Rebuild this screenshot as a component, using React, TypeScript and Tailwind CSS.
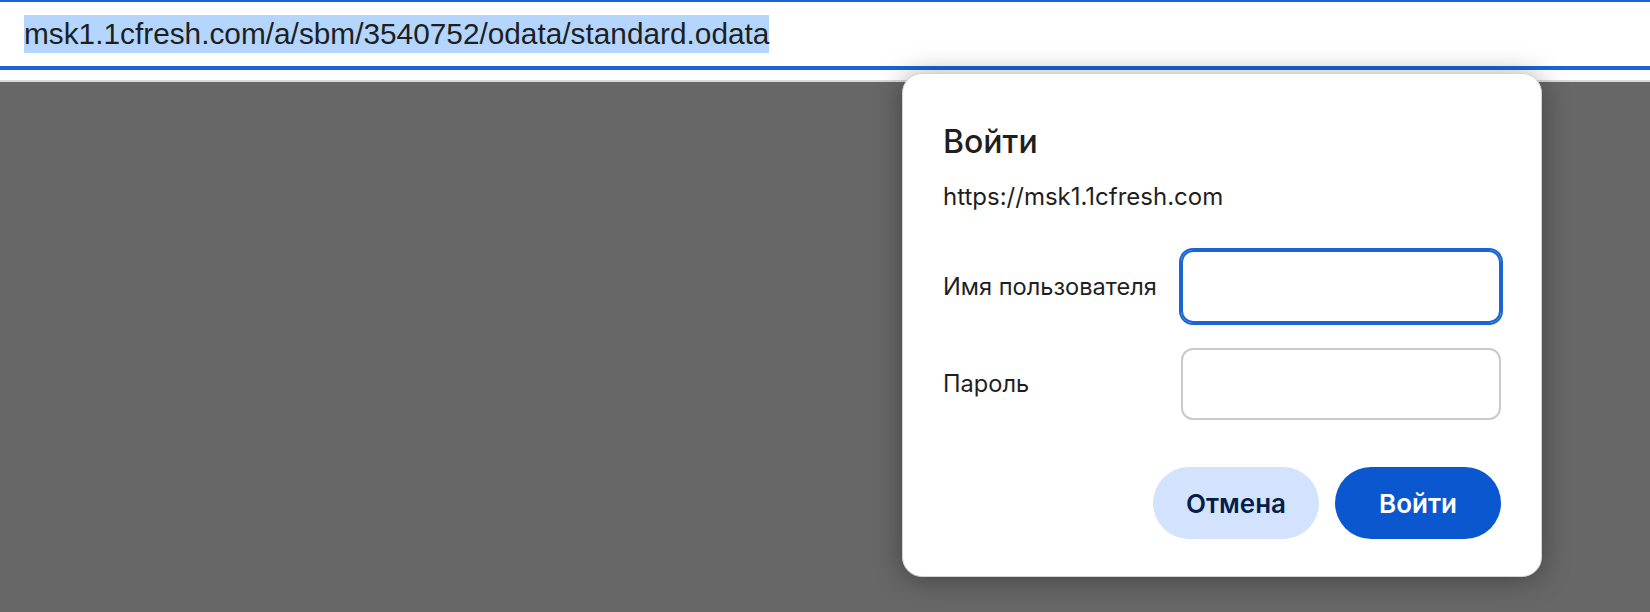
import React from "react";

export default function App() {
  return (
    <div className="relative w-[1650px] h-[612px] overflow-hidden bg-[#676767]">
      {/* Toolbar / URL bar */}
      <div className="bg-white">
        <div className="h-[2px] bg-[#1a65d2]" />
        <div className="h-[64px] flex items-center pl-[24px]">
          <span className="bg-[#b4d6fe] text-[#1f1f1f] text-[29.8px] leading-[38px] font-['Liberation_Sans',Arial,sans-serif]">
            msk1.1cfresh.com/a/sbm/3540752/odata/standard.odata
          </span>
        </div>
        <div className="h-[4px] bg-[#1a65d2]" />
        <div className="h-[10px] bg-white" />
        <div className="h-[2px] bg-[#d9d9d9]" />
      </div>

      {/* Dialog */}
      <div className="absolute left-[902px] top-[73px] w-[640px] h-[504px] bg-white rounded-[20px] shadow-[0_2px_28px_rgba(0,0,0,0.35)] border border-[#d4d4d4] pt-[49px] px-[40px] pb-[40px] font-['Inter','Noto_Sans',sans-serif] text-[#1f1f1f]">
        <div className="text-[32px] leading-[38px] font-medium">Войти</div>
        <div className="mt-[22px] text-[24px] leading-[28px]">https://msk1.1cfresh.com</div>

        <div className="mt-[39px] grid grid-cols-[1fr_320px] gap-y-[25px] items-center">
          <div className="text-[23.6px] leading-[28px]">Имя пользователя</div>
          <div className="h-[73px] rounded-[12px] border-2 border-[#1a65d2] outline-2 outline-solid outline-[#1a65d2] bg-white" />
          <div className="text-[23.6px] leading-[28px]">Пароль</div>
          <div className="h-[72px] rounded-[12px] border-2 border-[#cacaca] bg-white" />
        </div>

        <div className="mt-[47px] flex justify-end gap-[16px]">
          <button className="w-[166px] h-[72px] rounded-full bg-[#d3e3fd] text-[#041e49] text-[26px] font-semibold">
            Отмена
          </button>
          <button className="w-[166px] h-[72px] rounded-full bg-[#0b57d0] text-white text-[26px] font-semibold">
            Войти
          </button>
        </div>
      </div>
    </div>
  );
}
